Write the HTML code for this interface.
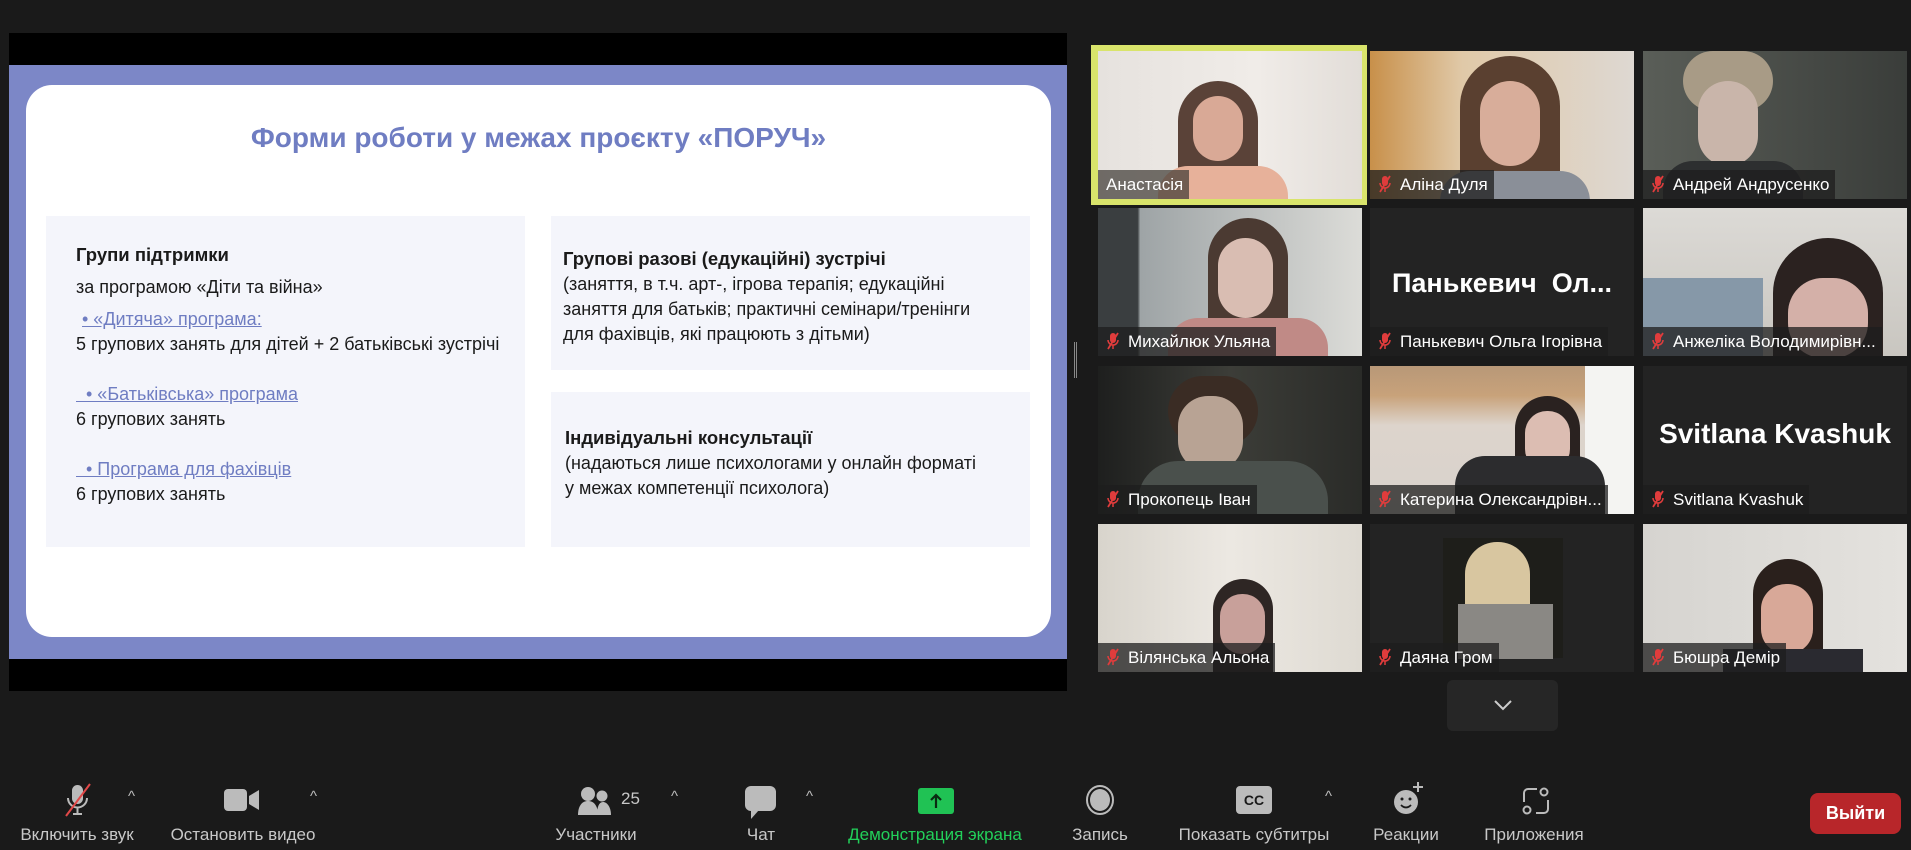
<!DOCTYPE html>
<html><head><meta charset="utf-8"><style>
*{margin:0;padding:0;box-sizing:border-box}
body{width:1911px;height:850px;background:#1a1a1a;position:relative;overflow:hidden;font-family:"Liberation Sans","DejaVu Sans",sans-serif}
.a{position:absolute}
.share{left:9px;top:33px;width:1058px;height:658px;background:#000}
.slide{left:9px;top:65px;width:1058px;height:594px;background:#7c87c7}
.card{left:26px;top:85px;width:1025px;height:552px;background:#fff;border-radius:26px}
.title{left:26px;top:122px;width:1025px;text-align:center;color:#6f7dc2;font-size:28px;font-weight:bold}
.box{background:#f4f5fb}
.t{position:absolute;font-size:18px;color:#1a1a1a;white-space:nowrap}
.b{font-weight:bold;font-size:18.5px}
.l{color:#6f7dc2;text-decoration:underline}
.tile{position:absolute;width:264px;height:148px;background:#232323;overflow:hidden}
.nm{position:absolute;left:0;bottom:0;height:29px;background:rgba(30,30,30,.75);color:#fff;font-size:17px;line-height:29px;padding:0 6px 0 8px;white-space:nowrap}
.mi{display:inline-block;width:14px;height:18px;vertical-align:-3px;margin-right:8px}
.big{position:absolute;left:0;width:264px;text-align:center;color:#fff;font-weight:bold;font-size:30px;top:56px}
.tb{position:absolute;top:825px;color:#c8c8c8;font-size:17px;white-space:nowrap;transform:translateX(-50%)}
.car{position:absolute;top:788px;color:#bbb;font-size:15px}
</style></head><body>
<div class="a share"></div>
<div class="a slide"></div>
<div class="a card"></div>
<div class="a title">Форми роботи у межах проєкту «ПОРУЧ»</div>
<div class="a box" style="left:46px;top:216px;width:479px;height:331px"></div>
<div class="a box" style="left:551px;top:216px;width:479px;height:154px"></div>
<div class="a box" style="left:551px;top:392px;width:479px;height:155px"></div>
<div class="t b" style="left:76px;top:244px">Групи підтримки</div>
<div class="t" style="left:76px;top:277px">за програмою «Діти та війна»</div>
<div class="t l" style="left:82px;top:309px">• «Дитяча» програма:</div>
<div class="t" style="left:76px;top:334px">5 групових занять для дітей + 2 батьківські зустрічі</div>
<div class="t l" style="left:76px;top:384px">&nbsp; • «Батьківська» програма</div>
<div class="t" style="left:76px;top:409px">6 групових занять</div>
<div class="t l" style="left:76px;top:459px">&nbsp; • Програма для фахівців</div>
<div class="t" style="left:76px;top:484px">6 групових занять</div>
<div class="t b" style="left:563px;top:248px">Групові разові (едукаційні) зустрічі</div>
<div class="t" style="left:563px;top:272px;line-height:25px">(заняття, в т.ч. арт-, ігрова терапія; едукаційні<br>заняття для батьків; практичні семінари/тренінги<br>для фахівців, які працюють з дітьми)</div>
<div class="t b" style="left:565px;top:427px">Індивідуальні консультації</div>
<div class="t" style="left:565px;top:451px;line-height:25px">(надаються лише психологами у онлайн форматі<br>у межах компетенції психолога)</div>
<div class="a" style="left:1074px;top:342px;width:3px;height:36px;border-left:1px solid #888;border-right:1px solid #888"></div>

<div class="a" style="left:1091px;top:45px;width:276px;height:160px;background:#d9e46b"></div>
<svg width="0" height="0" style="position:absolute"><defs><symbol id="m" viewBox="0 0 14 18"><rect x="4" y="1" width="6" height="10" rx="3" fill="#e03c3c"/><path d="M2 8a5 5 0 0 0 10 0M7 13v4" stroke="#e03c3c" stroke-width="1.5" fill="none"/><path d="M12 1L2 17" stroke="#e03c3c" stroke-width="1.8"/></symbol></defs></svg>

<div class="tile" style="left:1098px;top:51px;background:linear-gradient(90deg,#e6e2de,#f0ece8 60%,#e2ddd8)"><div class="a" style="left:80px;top:30px;width:80px;height:130px;border-radius:40px 40px 0 0;background:#5a4238"></div><div class="a" style="left:95px;top:45px;width:50px;height:65px;border-radius:25px;background:#d9a996"></div><div class="a" style="left:60px;top:115px;width:130px;height:40px;border-radius:30px 30px 0 0;background:#e7b19a"></div><div class="nm" style="background:rgba(60,55,50,.7)">Анастасія</div></div>
<div class="tile" style="left:1370px;top:51px;background:linear-gradient(90deg,#c8904a,#e0c9a8 35%,#ded8d2)"><div class="a" style="left:90px;top:5px;width:100px;height:150px;border-radius:50px 50px 0 0;background:#5a4030"></div><div class="a" style="left:110px;top:30px;width:60px;height:85px;border-radius:30px;background:#d8ad9a"></div><div class="a" style="left:70px;top:120px;width:150px;height:40px;background:#8a8f98;border-radius:30px 30px 0 0"></div><div class="nm"><svg class="mi"><use href="#m"/></svg>Аліна Дуля</div></div>
<div class="tile" style="left:1643px;top:51px;background:linear-gradient(90deg,#5a5e58,#3a3d3a)"><div class="a" style="left:40px;top:0;width:90px;height:60px;border-radius:40px;background:#a89b86"></div><div class="a" style="left:55px;top:30px;width:60px;height:85px;border-radius:30px;background:#c9b5aa"></div><div class="a" style="left:20px;top:110px;width:140px;height:40px;background:#2d2f30;border-radius:30px 30px 0 0"></div><div class="nm"><svg class="mi"><use href="#m"/></svg>Андрей Андрусенко</div></div>

<div class="tile" style="left:1098px;top:208px;background:linear-gradient(90deg,#3a3e40 15%,#9ea4a6 16%,#dcdcd8)"><div class="a" style="left:110px;top:10px;width:80px;height:140px;border-radius:40px 40px 0 0;background:#4b3a32"></div><div class="a" style="left:120px;top:30px;width:55px;height:80px;border-radius:28px;background:#d9bdb2"></div><div class="a" style="left:70px;top:110px;width:160px;height:40px;background:#c08a86;border-radius:30px 30px 0 0"></div><div class="nm"><svg class="mi"><use href="#m"/></svg>Михайлюк Ульяна</div></div>
<div class="tile" style="left:1370px;top:208px"><div class="big" style="top:60px;font-size:27px">Панькевич&nbsp; Ол...</div><div class="nm"><svg class="mi"><use href="#m"/></svg>Панькевич Ольга Ігорівна</div></div>
<div class="tile" style="left:1643px;top:208px;background:linear-gradient(180deg,#dcdad6,#c9c6c0)"><div class="a" style="left:0;top:70px;width:120px;height:80px;background:#8698a8"></div><div class="a" style="left:130px;top:30px;width:110px;height:120px;border-radius:55px 55px 0 0;background:#2b2220"></div><div class="a" style="left:145px;top:70px;width:80px;height:80px;border-radius:35px;background:#d4b0a8"></div><div class="nm"><svg class="mi"><use href="#m"/></svg>Анжеліка Володимирівн...</div></div>

<div class="tile" style="left:1098px;top:366px;background:linear-gradient(90deg,#1e1f1e,#3c3d38 50%,#2a2b28)"><div class="a" style="left:70px;top:10px;width:90px;height:70px;border-radius:40px;background:#3a2c24"></div><div class="a" style="left:80px;top:30px;width:65px;height:75px;border-radius:30px;background:#b8a394"></div><div class="a" style="left:40px;top:95px;width:190px;height:55px;background:#4a504c;border-radius:40px 40px 0 0"></div><div class="nm"><svg class="mi"><use href="#m"/></svg>Прокопець Іван</div></div>
<div class="tile" style="left:1370px;top:366px;background:linear-gradient(180deg,#b89878 0,#c8a27a 20%,#ddd4cc 40%,#d8d2cc)"><div class="a" style="left:215px;top:0;width:50px;height:148px;background:#f4f4f2"></div><div class="a" style="left:145px;top:30px;width:65px;height:120px;border-radius:33px 33px 0 0;background:#2a2220"></div><div class="a" style="left:155px;top:45px;width:45px;height:60px;border-radius:22px;background:#dcbdb2"></div><div class="a" style="left:85px;top:90px;width:150px;height:60px;background:#2c2c2e;border-radius:30px 30px 0 0"></div><div class="nm"><svg class="mi"><use href="#m"/></svg>Катерина Олександрівн...</div></div>
<div class="tile" style="left:1643px;top:366px"><div class="big" style="top:52px;font-size:28px">Svitlana Kvashuk</div><div class="nm"><svg class="mi"><use href="#m"/></svg>Svitlana Kvashuk</div></div>

<div class="tile" style="left:1098px;top:524px;background:linear-gradient(90deg,#d8d4cc,#ece8e2 50%,#dedad2)"><div class="a" style="left:115px;top:55px;width:60px;height:95px;border-radius:30px 30px 0 0;background:#2e2624"></div><div class="a" style="left:122px;top:70px;width:45px;height:60px;border-radius:22px;background:#c8a09a"></div><div class="nm"><svg class="mi"><use href="#m"/></svg>Вілянська Альона</div></div>
<div class="tile" style="left:1370px;top:524px"><div class="a" style="left:73px;top:14px;width:120px;height:120px;background:#1e1e1a"></div><div class="a" style="left:95px;top:18px;width:65px;height:90px;border-radius:32px 32px 10px 10px;background:#d8c6a0"></div><div class="a" style="left:88px;top:80px;width:95px;height:55px;background:#8a8884"></div><div class="nm"><svg class="mi"><use href="#m"/></svg>Даяна Гром</div></div>
<div class="tile" style="left:1643px;top:524px;background:linear-gradient(90deg,#d6d4d0,#e4e2de)"><div class="a" style="left:110px;top:35px;width:70px;height:115px;border-radius:35px 35px 0 0;background:#2a201c"></div><div class="a" style="left:118px;top:60px;width:52px;height:70px;border-radius:25px;background:#d8a898"></div><div class="a" style="left:80px;top:125px;width:140px;height:30px;background:#2a2a30"></div><div class="nm"><svg class="mi"><use href="#m"/></svg>Бюшра Демір</div></div>

<div class="a" style="left:1447px;top:680px;width:111px;height:51px;background:#262626;border-radius:6px"><svg class="a" style="left:46px;top:19px" width="20" height="12"><path d="M2 2l8 8 8-8" stroke="#ccc" stroke-width="2" fill="none"/></svg></div>

<svg class="a" style="left:64px;top:783px" width="28" height="34"><rect x="8" y="2" width="11" height="19" rx="5.5" fill="#bbb"/><path d="M4 15a9.5 9.5 0 0 0 19 0M13.5 25v6M9 31h9" stroke="#bbb" stroke-width="2" fill="none"/><path d="M26 1L2 33" stroke="#e04848" stroke-width="2"/></svg>
<div class="car" style="left:128px">^</div>
<svg class="a" style="left:224px;top:788px" width="38" height="24"><rect x="0" y="1" width="23" height="22" rx="4" fill="#bbb"/><path d="M25 8l10-6v20l-10-6z" fill="#bbb"/></svg>
<div class="car" style="left:310px">^</div>
<svg class="a" style="left:578px;top:786px" width="36" height="30"><circle cx="10" cy="8" r="7" fill="#bbb"/><path d="M0 29c0-9 4-14 10-14s10 5 10 14z" fill="#bbb"/><circle cx="24" cy="10" r="5.5" fill="#bbb"/><path d="M19 29c0-8 2-13 6-13s8 5 8 13z" fill="#bbb"/></svg>
<div class="a" style="left:621px;top:789px;color:#c8c8c8;font-size:17px">25</div>
<div class="car" style="left:671px">^</div>
<svg class="a" style="left:745px;top:786px" width="32" height="34"><rect x="0" y="0" width="31" height="25" rx="6" fill="#bbb"/><path d="M6 23v10l8-9z" fill="#bbb"/></svg>
<div class="car" style="left:806px">^</div>
<div class="a" style="left:918px;top:788px;width:36px;height:26px;background:#20c254;border-radius:3px"><svg class="a" style="left:11px;top:5px" width="14" height="16"><path d="M7 15V2M2 7l5-5 5 5" stroke="#0a2a12" stroke-width="2.2" fill="none"/></svg></div>
<svg class="a" style="left:1085px;top:784px" width="30" height="32"><ellipse cx="15" cy="16" rx="13" ry="14" fill="none" stroke="#bbb" stroke-width="2"/><ellipse cx="15" cy="16" rx="10" ry="11" fill="#bbb"/></svg>
<div class="a" style="left:1236px;top:786px;width:36px;height:28px;background:#bbb;border-radius:4px;color:#1a1a1a;font-size:14px;font-weight:bold;text-align:center;line-height:28px">CC</div>
<div class="car" style="left:1325px">^</div>
<svg class="a" style="left:1394px;top:780px" width="30" height="36"><circle cx="12" cy="22" r="12" fill="#bbb"/><circle cx="8" cy="19" r="1.5" fill="#1a1a1a"/><circle cx="16" cy="19" r="1.5" fill="#1a1a1a"/><path d="M7 25q5 5 10 0" stroke="#1a1a1a" stroke-width="1.8" fill="none"/><path d="M24 2v10M19 7h10" stroke="#bbb" stroke-width="2"/></svg>
<svg class="a" style="left:1522px;top:787px" width="28" height="28"><path d="M2 15V6a4 4 0 0 1 4-4h9M26 13v9a4 4 0 0 1-4 4h-8" stroke="#bbb" stroke-width="2" fill="none"/><circle cx="22" cy="5" r="3.5" fill="none" stroke="#bbb" stroke-width="2"/><circle cx="5" cy="23" r="3.5" fill="none" stroke="#bbb" stroke-width="2"/></svg>

<div class="tb" style="left:77px">Включить звук</div>
<div class="tb" style="left:243px">Остановить видео</div>
<div class="tb" style="left:596px">Участники</div>
<div class="tb" style="left:761px">Чат</div>
<div class="tb" style="left:935px;color:#22d05a">Демонстрация экрана</div>
<div class="tb" style="left:1100px">Запись</div>
<div class="tb" style="left:1254px">Показать субтитры</div>
<div class="tb" style="left:1406px">Реакции</div>
<div class="tb" style="left:1534px">Приложения</div>
<div class="a" style="left:1810px;top:793px;width:91px;height:41px;background:#b8262a;border-radius:8px;color:#fff;font-weight:bold;font-size:18px;text-align:center;line-height:41px">Выйти</div>
</body></html>
